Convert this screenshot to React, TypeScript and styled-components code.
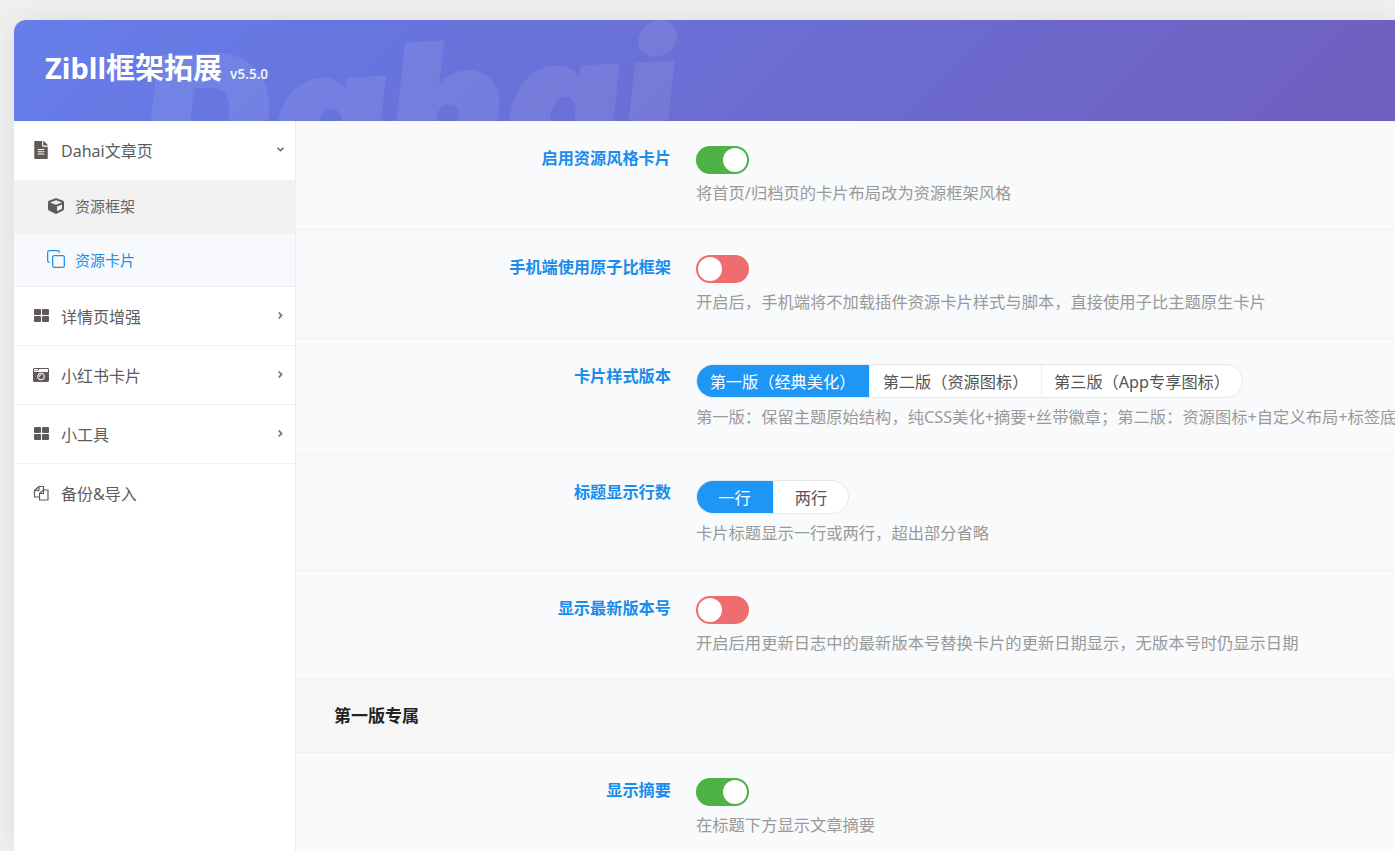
import React from 'react';
import styled, { createGlobalStyle } from 'styled-components';
import { FaFileAlt, FaCube, FaCameraRetro, FaAngleDown, FaAngleRight } from 'react-icons/fa';
import { Copy } from 'lucide-react';

const GlobalStyle = createGlobalStyle`
  html, body {
    margin: 0;
    height: 851px;
    overflow: hidden;
    background: #f0f0f1;
    font-family: "Noto Sans", "Noto Sans CJK SC", sans-serif;
  }
`;

const Wrap = styled.div`
  margin: 20px 0 0 14px;
  border-radius: 12px 0 0 0;
  overflow: hidden;
  box-shadow: 0 0 30px rgba(0, 0, 0, 0.08);
`;

const Header = styled.header`
  position: relative;
  height: 101px;
  box-sizing: border-box;
  padding: 28px 31px 0;
  background: linear-gradient(135deg, #667eea 0%, #764ba2 100%) left top / 2300px 100% no-repeat;
  overflow: hidden;
`;

const Watermark = styled.div`
  position: absolute;
  left: 134px;
  top: -3px;
  font-family: "Inter", sans-serif;
  font-size: 176px;
  line-height: 1.2;
  font-weight: 900;
  font-style: italic;
  letter-spacing: 3px;
  color: #fff;
  -webkit-text-stroke: 5px #fff;
  opacity: 0.08;
  white-space: nowrap;
  transform: rotate(-3deg);
  transform-origin: left bottom;
`;

const Title = styled.h1`
  position: relative;
  margin: 0;
  display: flex;
  align-items: baseline;
  gap: 8px;
  font-size: 29px;
  line-height: 40px;
  font-weight: 700;
  color: #fff;
`;

const Version = styled.small`
  font-size: 13.5px;
  font-weight: 600;
  opacity: 0.9;
`;

const Body = styled.div`
  display: flex;
  height: 730px;
  background: #f9fafc;
`;

const Sidebar = styled.nav`
  flex: 0 0 281px;
  background: #fff;
  border-right: 1px solid #eee;
`;

const NavItem = styled.div<{ $open?: boolean; $last?: boolean }>`
  display: flex;
  align-items: center;
  height: 59px;
  box-sizing: border-box;
  padding: 0 9px 1px 19px;
  font-size: 16px;
  color: #5c5c5c;
  border-bottom: 1px solid ${(p) => (p.$open || p.$last ? 'transparent' : '#f0f0f0')};
`;

const NavIcon = styled.span`
  display: inline-flex;
  justify-content: center;
  flex: 0 0 16px;
  min-width: 0;
  margin-right: 12px;
  font-size: 16px;
  color: #5f5a57;
`;

const NavLabel = styled.span`
  flex: 1;
`;

const Arrow = styled.span`
  display: inline-flex;
  font-size: 11px;
  color: #777;
`;

const SubItem = styled.div<{ $active?: boolean; $current?: boolean }>`
  display: flex;
  align-items: center;
  height: ${(p) => (p.$current ? 53 : 54)}px;
  box-sizing: border-box;
  padding: 0 0 ${(p) => (p.$current ? 2 : 3)}px 34px;
  font-size: 15px;
  color: ${(p) => (p.$current ? '#1e90e8' : '#666')};
  background: ${(p) => (p.$active ? '#f1f1f1' : p.$current ? '#f7f9fc' : '#fff')};
  border-bottom: ${(p) => (p.$current ? '1px solid #eee' : 'none')};
`;

const SubIcon = styled.span<{ $current?: boolean }>`
  display: inline-flex;
  justify-content: center;
  flex: 0 0 16px;
  min-width: 0;
  margin-right: 11px;
  font-size: 16px;
  color: ${(p) => (p.$current ? '#1e90e8' : '#5f5a57')};
  svg {
    flex-shrink: 0;
  }
`;

const Content = styled.main`
  flex: 1;
  min-width: 0;
`;

const Field = styled.div<{ $height: number }>`
  display: flex;
  height: ${(p) => p.$height}px;
  box-sizing: border-box;
  padding-top: 25px;
  border-bottom: 1px solid #eef0f2;
`;

const Label = styled.div`
  flex: 0 0 375px;
  text-align: right;
  font-size: 16.2px;
  line-height: 24px;
  font-weight: 700;
  color: #1a8ceb;
`;

const Control = styled.div`
  margin-left: 25px;
`;

const Toggle = styled.div<{ $on?: boolean }>`
  position: relative;
  width: 53px;
  height: 28px;
  border-radius: 14px;
  background: ${(p) => (p.$on ? '#4db146' : '#ee6d6f')};
`;

const Knob = styled.span<{ $on?: boolean }>`
  position: absolute;
  top: 2px;
  left: ${(p) => (p.$on ? 27 : 2)}px;
  width: 24px;
  height: 24px;
  border-radius: 50%;
  background: #fff;
`;

const Desc = styled.div`
  margin-top: 8px;
  font-size: 16.3px;
  line-height: 22px;
  color: #999;
  white-space: nowrap;
`;

const Segments = styled.div`
  display: inline-flex;
  height: 34px;
  box-sizing: border-box;
  border-radius: 17px;
  overflow: hidden;
  border: 1px solid #e8e8ea;
  background: #fff;
`;

const Segment = styled.div<{ $active?: boolean; $width: number }>`
  width: ${(p) => p.$width}px;
  box-sizing: border-box;
  margin: ${(p) => (p.$active ? '-1px 0 -1px -1px' : 0)};
  display: flex;
  align-items: center;
  justify-content: center;
  font-size: 16.2px;
  color: ${(p) => (p.$active ? '#fff' : '#555')};
  background: ${(p) => (p.$active ? '#1e96f5' : 'transparent')};
  & + & {
    border-left: 1px solid #eee;
  }
`;

const Heading = styled.div`
  height: 74px;
  box-sizing: border-box;
  display: flex;
  align-items: center;
  padding: 0 0 2px 38px;
  font-size: 17px;
  font-weight: 700;
  color: #222;
  background: #f6f6f6;
  border-bottom: 1px solid #eef0f2;
`;

const SwitchControl: React.FC<{ on?: boolean }> = ({ on }) => (
  <Toggle $on={on}>
    <Knob $on={on} />
  </Toggle>
);

const GridIcon = () => (
  <svg width="15" height="13" viewBox="0 0 15 13" fill="currentColor">
    <rect x="0" y="0" width="7" height="6" rx="1" />
    <rect x="8" y="0" width="7" height="6" rx="1" />
    <rect x="0" y="7" width="7" height="6" rx="1" />
    <rect x="8" y="7" width="7" height="6" rx="1" />
  </svg>
);

const FilesIcon = () => (
  <svg width="16" height="16" viewBox="0 0 16 16" fill="none" stroke="currentColor" strokeWidth="1.2" strokeLinejoin="round">
    <path d="M6 5.5V1.5L1.5 5.5V12H6" />
    <path d="M6 1.5H10.5V5" />
    <path d="M1.5 5.5H6" />
    <path d="M10.5 5L6.5 8.5V15H15V5Z" />
    <path d="M10.5 5V8.5H6.5" />
  </svg>
);

export default function App() {
  return (
    <>
      <GlobalStyle />
      <Wrap>
        <Header>
          <Watermark>Dahai</Watermark>
          <Title>
            Zibll框架拓展 <Version>v5.5.0</Version>
          </Title>
        </Header>
        <Body>
          <Sidebar>
            <NavItem $open>
              <NavIcon><FaFileAlt size={18} /></NavIcon>
              <NavLabel>Dahai文章页</NavLabel>
              <Arrow><FaAngleDown /></Arrow>
            </NavItem>
            <SubItem $active>
              <SubIcon><FaCube /></SubIcon>
              资源框架
            </SubItem>
            <SubItem $current>
              <SubIcon $current><Copy size={20} strokeWidth={1.5} /></SubIcon>
              资源卡片
            </SubItem>
            <NavItem>
              <NavIcon><GridIcon /></NavIcon>
              <NavLabel>详情页增强</NavLabel>
              <Arrow><FaAngleRight /></Arrow>
            </NavItem>
            <NavItem>
              <NavIcon><FaCameraRetro /></NavIcon>
              <NavLabel>小红书卡片</NavLabel>
              <Arrow><FaAngleRight /></Arrow>
            </NavItem>
            <NavItem>
              <NavIcon><GridIcon /></NavIcon>
              <NavLabel>小工具</NavLabel>
              <Arrow><FaAngleRight /></Arrow>
            </NavItem>
            <NavItem $last>
              <NavIcon><FilesIcon /></NavIcon>
              <NavLabel>备份&amp;导入</NavLabel>
            </NavItem>
          </Sidebar>
          <Content>
            <Field $height={109}>
              <Label>启用资源风格卡片</Label>
              <Control>
                <SwitchControl on />
                <Desc>将首页/归档页的卡片布局改为资源框架风格</Desc>
              </Control>
            </Field>
            <Field $height={109}>
              <Label>手机端使用原子比框架</Label>
              <Control>
                <SwitchControl />
                <Desc>开启后，手机端将不加载插件资源卡片样式与脚本，直接使用子比主题原生卡片</Desc>
              </Control>
            </Field>
            <Field $height={116}>
              <Label>卡片样式版本</Label>
              <Control>
                <Segments>
                  <Segment $active $width={173}>第一版（经典美化）</Segment>
                  <Segment $width={172}>第二版（资源图标）</Segment>
                  <Segment $width={201}>第三版（App专享图标）</Segment>
                </Segments>
                <Desc>第一版：保留主题原始结构，纯CSS美化+摘要+丝带徽章；第二版：资源图标+自定义布局+标签底栏；第三版：App专享图标+下载按钮样式</Desc>
              </Control>
            </Field>
            <Field $height={116}>
              <Label>标题显示行数</Label>
              <Control>
                <Segments>
                  <Segment $active $width={77}>一行</Segment>
                  <Segment $width={75}>两行</Segment>
                </Segments>
                <Desc>卡片标题显示一行或两行，超出部分省略</Desc>
              </Control>
            </Field>
            <Field $height={108}>
              <Label>显示最新版本号</Label>
              <Control>
                <SwitchControl />
                <Desc>开启后用更新日志中的最新版本号替换卡片的更新日期显示，无版本号时仍显示日期</Desc>
              </Control>
            </Field>
            <Heading>第一版专属</Heading>
            <Field $height={109}>
              <Label>显示摘要</Label>
              <Control>
                <SwitchControl on />
                <Desc>在标题下方显示文章摘要</Desc>
              </Control>
            </Field>
          </Content>
        </Body>
      </Wrap>
    </>
  );
}
